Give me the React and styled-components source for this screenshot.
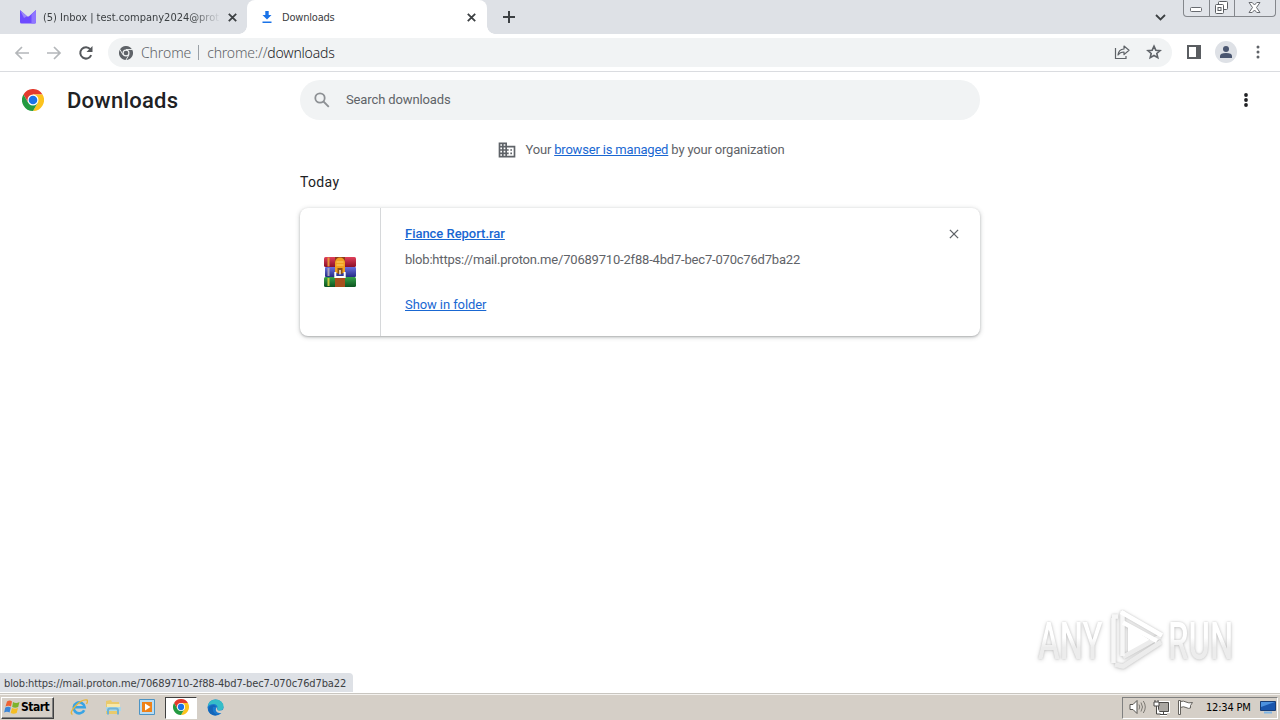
import React, { useState } from "react";
import styled, { createGlobalStyle } from "styled-components";

const GlobalStyle = createGlobalStyle`
  * {
    box-sizing: border-box;
  }
  body {
    margin: 0;
    background: #fff;
    overflow: hidden;
  }
  svg {
    flex: none;
  }
`;

const Screen = styled.div`
  width: 1280px;
  height: 720px;
  display: flex;
  flex-direction: column;
  position: relative;
  overflow: hidden;
  background: #fff;
  font-family: Roboto, "Liberation Sans", sans-serif;
`;

/* ---------- tab strip ---------- */

const TabStrip = styled.div`
  height: 34px;
  flex: none;
  display: flex;
  background: #dee1e6;
`;

const Tab = styled.div`
  width: ${(props) => (props.active ? "240px" : "247px")};
  height: 34px;
  display: flex;
  align-items: center;
  padding: ${(props) => (props.active ? "0 9px 0 15px" : "0 8px 0 20px")};
  position: relative;
  border-radius: 8px 8px 0 0;
  background: ${(props) => (props.active ? "#fff" : "transparent")};

  &::before,
  &::after {
    content: "";
    display: ${(props) => (props.active ? "block" : "none")};
    position: absolute;
    bottom: 0;
    width: 8px;
    height: 8px;
  }
  &::before {
    left: -8px;
    background: radial-gradient(circle at 0 0, transparent 7.5px, #fff 8px);
  }
  &::after {
    right: -8px;
    background: radial-gradient(circle at 100% 0, transparent 7.5px, #fff 8px);
  }
`;

const TabTitle = styled.span`
  flex: 1;
  min-width: 0;
  margin-left: ${(props) => props.gap};
  padding-top: 1px;
  white-space: nowrap;
  font-family: "DejaVu Sans Condensed", "DejaVu Sans", sans-serif;
  font-stretch: condensed;
  font-size: 11px;
  line-height: 16px;
  letter-spacing: ${(props) => props.spacing};
  color: #3c4043;
  mask-image: ${(props) =>
    props.fade ? "linear-gradient(90deg, #000 148px, transparent 178px)" : "none"};
`;

const TabClose = styled.button`
  width: 14px;
  height: 14px;
  flex: none;
  margin-left: 6px;
  padding: 0;
  border: 0;
  background: none;
  display: flex;
  align-items: center;
  justify-content: center;
`;

const NewTab = styled.div`
  width: 44px;
  display: flex;
  align-items: center;
  justify-content: center;
`;

const WindowTools = styled.div`
  margin-left: auto;
  display: flex;
  align-items: flex-start;
`;

const TabSearch = styled.div`
  width: 14px;
  height: 34px;
  margin-right: 14px;
  display: flex;
  align-items: center;
`;

const Caption = styled.div`
  width: 93px;
  height: 17px;
  margin-right: 4px;
  display: flex;
  border: 1px solid #84878c;
  border-top: 0;
  border-radius: 0 0 4px 4px;
  background: #e1e4e9;
`;

const CaptionButton = styled.div`
  width: ${(props) => props.w}px;
  display: flex;
  align-items: center;
  justify-content: center;
  padding: 0 1px 1px 0;
  & + & {
    border-left: 1px solid #84878c;
  }
`;

/* ---------- toolbar ---------- */

const Toolbar = styled.div`
  height: 38px;
  flex: none;
  display: flex;
  align-items: center;
  padding: 0 13px;
  border-bottom: 1px solid #dadce0;
`;

const NavButtons = styled.div`
  display: flex;
  gap: 14px;
  width: 95px;
`;

const Omnibox = styled.div`
  width: 1064px;
  height: 29px;
  border-radius: 15px;
  background: #f1f3f4;
  display: flex;
  align-items: center;
  padding: 0 10px 0 11px;
`;

const Origin = styled.span`
  margin-left: 8px;
  white-space: nowrap;
  font-family: "Noto Sans", "DejaVu Sans", sans-serif;
  font-weight: 300;
  font-size: 14px;
  line-height: 20px;
  letter-spacing: ${(props) => props.spacing};
  color: #5f6368;

  b {
    font-weight: 300;
    color: #202124;
  }
`;

const OriginDivider = styled.i`
  width: 1px;
  height: 15px;
  margin-left: 7px;
  background: #9aa0a6;
`;

const OmniboxActions = styled.div`
  margin-left: auto;
  padding-bottom: 1px;
  display: flex;
  gap: 16px;
`;

const ToolbarActions = styled.div`
  margin-left: 15px;
  padding-bottom: 1px;
  display: flex;
  align-items: center;
`;

const Avatar = styled.div`
  width: 22px;
  height: 22px;
  margin: 0 19px 0 14px;
  border-radius: 50%;
  background: #dee1e6;
  display: flex;
  align-items: center;
  justify-content: center;
`;

/* ---------- downloads page ---------- */

const Page = styled.main`
  flex: 1;
  min-height: 0;
  display: flex;
  flex-direction: column;
  position: relative;
`;

const Header = styled.header`
  height: 56px;
  display: flex;
  align-items: center;
  padding: 0 26px 0 22px;
`;

const PageTitle = styled.h1`
  width: 233px;
  margin: 0 0 0 23px;
  padding-top: 2px;
  font-size: 22px;
  line-height: 28px;
  font-weight: 500;
  letter-spacing: ${(props) => props.spacing};
  color: #202124;
`;

const SearchField = styled.label`
  width: 680px;
  height: 40px;
  border-radius: 20px;
  background: #f1f3f4;
  display: flex;
  align-items: center;
  padding-left: 12px;
  gap: 14px;

  input {
    flex: 1;
    padding: 0;
    border: 0;
    outline: 0;
    background: none;
    font: 13px/20px Roboto, sans-serif;
    letter-spacing: -0.12px;
    color: #202124;
  }
  input::placeholder {
    color: #5f6368;
    opacity: 1;
  }
`;

const MoreMenu = styled.div`
  margin-left: auto;
  width: 16px;
  display: flex;
  justify-content: center;
`;

const Managed = styled.div`
  height: 44px;
  display: flex;
  align-items: center;
  justify-content: center;
  gap: 8px;
  padding-left: 2px;
  font-size: 13px;
  line-height: 20px;
  letter-spacing: -0.18px;
  color: #5f6368;
`;

const Link = styled.a`
  color: #1967d2;
  text-decoration: underline;
  font-weight: ${(props) => (props.strong ? 500 : 400)};
  letter-spacing: ${(props) => props.spacing || "inherit"};
`;

const Content = styled.section`
  width: 680px;
  margin: 0 auto;
`;

const DateHeading = styled.h3`
  margin: 0 0 15px;
  font-size: 14px;
  line-height: 21px;
  font-weight: 400;
  letter-spacing: 0.35px;
  color: #202124;
`;

const Card = styled.article`
  height: 128px;
  display: flex;
  border-radius: 8px;
  background: #fff;
  box-shadow: 0 1px 2px rgba(60, 64, 67, 0.3), 0 1px 4px 1px rgba(60, 64, 67, 0.18);
`;

const FileIcon = styled.div`
  width: 81px;
  border-right: 1px solid #d6d8da;
  display: flex;
  align-items: center;
  justify-content: center;
`;

const Details = styled.div`
  flex: 1;
  padding: 16px 24px;
  display: flex;
  flex-direction: column;
  align-items: flex-start;
  font-size: 13px;
  line-height: 20px;
  white-space: nowrap;
`;

const FileUrl = styled.span`
  margin: 6px 0 25px;
  color: #5f6368;
  letter-spacing: ${(props) => props.spacing};
`;

const RemoveButton = styled.button`
  width: 14px;
  height: 14px;
  margin: 19px 19px 0 0;
  padding: 0;
  border: 0;
  background: none;
  display: flex;
  align-items: center;
  justify-content: center;
`;

const StatusBubble = styled.div`
  position: absolute;
  left: 0;
  bottom: 1px;
  width: 353px;
  height: 19px;
  padding-left: 4px;
  border-radius: 0 4px 0 0;
  background: #dee1e6;
  font-family: "DejaVu Sans Condensed", "DejaVu Sans", sans-serif;
  font-stretch: condensed;
  font-size: 11px;
  line-height: 21px;
  letter-spacing: ${(props) => props.spacing};
  white-space: nowrap;
  color: #3c4043;
`;

const Watermark = styled.div`
  position: absolute;
  left: 1038px;
  top: 609px;
  width: 200px;
  height: 64px;
  display: flex;
  align-items: center;
  filter: drop-shadow(0 0 1px rgba(0, 0, 0, 0.16)) drop-shadow(0 1px 2px rgba(0, 0, 0, 0.16));
`;

const WatermarkWord = styled.span`
  display: block;
  width: 110px;
  padding-top: 2px;
  font-size: 52px;
  line-height: 64px;
  font-weight: 500;
  background: linear-gradient(#fff 45%, #ececec 60%);
  background-clip: text;
  color: transparent;
  white-space: nowrap;
  transform: scaleX(${(props) => props.squeeze});
  transform-origin: 0 50%;
`;

const WordSlot = styled.div`
  width: ${(props) => props.w}px;
  margin-left: ${(props) => props.gap || 0}px;
`;

/* ---------- taskbar ---------- */

const Taskbar = styled.footer`
  height: 27px;
  flex: none;
  display: flex;
  align-items: center;
  padding: 1px 2px 0 1px;
  background: #d5cfc7;
  border-top: 1px solid #c9c6c0;
  box-shadow: inset 0 1px 0 #f4f2ef;
`;

const StartButton = styled.button`
  width: 53px;
  height: 22px;
  padding: 0 0 2px 2px;
  display: flex;
  align-items: center;
  gap: 0;
  background: #d5cfc7;
  border: 1px solid;
  border-color: #fff #404040 #404040 #fff;
  box-shadow: inset -1px -1px 0 #808080;
  font: 700 12px/16px "DejaVu Sans Condensed", "DejaVu Sans", sans-serif;
  font-stretch: condensed;
  letter-spacing: -0.5px;
  color: #000;
`;

const QuickLaunch = styled.div`
  margin-left: 8px;
  display: flex;
  align-items: center;
`;

const TaskItem = styled.div`
  width: ${(props) => (props.pressed ? "32px" : "34px")};
  height: 22px;
  margin: ${(props) => (props.pressed ? "0 1px" : "0")};
  padding-bottom: 1px;
  display: flex;
  align-items: center;
  justify-content: center;
  background: ${(props) => (props.pressed ? "#fff" : "transparent")};
  border: ${(props) => (props.pressed ? "1px solid" : "0")};
  border-color: #404040 #fff #fff #404040;
`;

const Tray = styled.div`
  width: 156px;
  height: 22px;
  margin-left: auto;
  padding: 0 1px 1px 6px;
  display: flex;
  align-items: center;
  gap: 7px;
  border: 1px solid;
  border-color: #808080 #fff #fff #808080;
`;

const Clock = styled.span`
  width: 47px;
  margin-left: 5px;
  padding-top: 1px;
  font: 11px/16px "DejaVu Sans Condensed", "DejaVu Sans", sans-serif;
  font-stretch: condensed;
  letter-spacing: -0.2px;
  white-space: nowrap;
  color: #000;
`;

/* ---------- icons ---------- */

const Cross = ({ size = 9, width = 1.8, color = "#3c4043" }) => (
  <svg width={size} height={size} viewBox="0 0 9 9" stroke={color} strokeWidth={width}>
    <path d="M.8.8l7.4 7.4M8.2.8L.8 8.2" />
  </svg>
);

const ProtonIcon = () => (
  <svg width="16" height="14" viewBox="0 0 16 14">
    <path d="M0 0l7 6.2q1 .8 2 0L16 0v12q0 1.500-1.500 1.500H1.500Q0 13.500 0 12z" fill="#6d4aff" />
    <path d="M11.500 4.200L16 0v12q0 1.500-1.500 1.500h-3z" fill="#8f76ff" />
    <path d="M0 0l7 6.200L4 8z" fill="#9a86f8" />
  </svg>
);

const DownloadIcon = () => (
  <svg width="10" height="13" viewBox="0 0 10 13" fill="#1a73e8">
    <path d="M3.300 0h3.400v4h2.800L5 8.500.5 4h2.800zM.5 10.500h9v1.500h-9z" />
  </svg>
);

const ArrowIcon = ({ flip }) => (
  <svg width="18" height="16" viewBox="0 0 18 16" fill="none" stroke="#b4b7ba" strokeWidth="1.700">
    <path d={flip ? "M2 8h13M9 2l6 6-6 6" : "M16 8H3M9 2L3 8l6 6"} />
  </svg>
);

const ReloadIcon = () => (
  <svg width="16" height="16" viewBox="-1 0 16 16">
    <path d="M13.200 10.200A5.700 5.700 0 1 1 12.400 4.300" fill="none" stroke="#55585c" strokeWidth="2" />
    <path d="M14.500 1v6h-6z" fill="#55585c" />
  </svg>
);

const ChromeIcon = ({ size, mono }) => {
  const [red, yellow, green, blue] = mono
    ? ["#5f6368", "#5f6368", "#5f6368", "#5f6368"]
    : ["#e33b2e", "#fcc31e", "#249a41", "#1a73e8"];
  return (
    <svg width={size} height={size} viewBox="0 0 48 48">
      <path d="M24 24L13.600 30 3.200 12A24 24 0 0 1 44.800 12H24z" fill={red} />
      <path d="M24 12h20.800A24 24 0 0 1 24 48l10.400-18L24 24z" fill={yellow} />
      <path d="M3.200 12A24 24 0 0 0 24 48l10.400-18L24 24l-10.400 6z" fill={green} />
      {mono && (
        <path d="M24 12h22M34.400 30L23.500 49M13.600 30L2.500 11" stroke="#f1f3f4" strokeWidth="3" />
      )}
      <circle cx="24" cy="24" r="12" fill={mono ? "#f1f3f4" : "#fff"} />
      <circle cx="24" cy="24" r={mono ? 8 : 9.4} fill={blue} />
    </svg>
  );
};

const ShareIcon = () => (
  <svg width="16" height="16" viewBox="0 0 16 16" fill="none" stroke="#5f6368" strokeWidth="1.200">
    <path d="M1.500 4v10.500H12V12" />
    <path d="M4 11q.6-5.600 6-6V2l5 4.300-5 4.300V8Q6 8 4 11z" strokeLinejoin="round" />
  </svg>
);

const StarIcon = () => (
  <svg width="16" height="16" viewBox="0 0 16 16" fill="none" stroke="#5f6368" strokeWidth="1.600">
    <path d="M8 2.200l1.800 4 4.300.4-3.300 2.900 1 4.200L8 11.500l-3.800 2.200 1-4.200-3.300-2.900 4.300-.4z" />
  </svg>
);

const SidePanelIcon = () => (
  <svg width="14" height="14" viewBox="0 0 14 14">
    <path d="M1 1h12v12H1z" fill="none" stroke="#5a5d61" strokeWidth="2" />
    <path d="M9 0h5v14H9z" fill="#5a5d61" />
  </svg>
);

const PersonIcon = () => (
  <svg width="12" height="12" viewBox="0 0 12 12" fill="#4a5670">
    <circle cx="6" cy="3" r="3" />
    <path d="M0 12V10q0-3 6-3t6 3v2z" />
  </svg>
);

const Dots = ({ r = 1.5, gap = 5, color = "#5f6368" }) => (
  <svg width="4" height="16" viewBox="0 0 4 16" fill={color}>
    <circle cx="2" cy={8 - gap} r={r} />
    <circle cx="2" cy="8" r={r} />
    <circle cx="2" cy={8 + gap} r={r} />
  </svg>
);

const SearchIcon = () => (
  <svg width="20" height="20" viewBox="0 0 20 20" fill="none" stroke="#8d9094" strokeWidth="1.800">
    <circle cx="8" cy="8" r="4.700" />
    <path d="M11.500 11.500l5.300 5.300" />
  </svg>
);

const BusinessIcon = () => (
  <svg width="20" height="20" viewBox="0 0 24 24" fill="#5f6368">
    <path d="M12 7V3H2v18h20V7H12zM6 19H4v-2h2v2zm0-4H4v-2h2v2zm0-4H4V9h2v2zm0-4H4V5h2v2zm4 12H8v-2h2v2zm0-4H8v-2h2v2zm0-4H8V9h2v2zm0-4H8V5h2v2zm10 12h-8v-2h2v-2h-2v-2h2v-2h-2V9h8v10zm-2-8h-2v2h2v-2zm0 4h-2v2h2v-2z" />
  </svg>
);

const RarIcon = () => (
  <svg width="32" height="32" viewBox="0 0 32 32">
    <defs>
      {[
        ["rarRed", "#e0405a", "#8c1028"],
        ["rarBlue", "#6a70e0", "#262c86"],
        ["rarGreen", "#36a34a", "#0c5420"],
      ].map(([id, top, bottom]) => (
        <linearGradient id={id} key={id} x1="0" y1="0" x2="0" y2="1">
          <stop offset="0" stopColor={top} />
          <stop offset="1" stopColor={bottom} />
        </linearGradient>
      ))}
    </defs>
    <rect y="1" width="32" height="10" rx="1.500" fill="url(#rarRed)" />
    <rect x="1" y="11" width="31" height="10" rx="1" fill="url(#rarBlue)" />
    <rect y="21" width="32" height="10" rx="1.500" fill="url(#rarGreen)" />
    <path d="M4.500 1.500v9" stroke="#e8963c" strokeWidth="2" />
    <path d="M4.500 12v8" stroke="#aaa4bc" strokeWidth="2" />
    <path d="M4.500 22v8" stroke="#c8c63e" strokeWidth="2" />
    <path d="M11 22h10v9H11z" fill="#a84f1d" />
    <path d="M11 1h10v5H11z" fill="#8e3a1c" />
    <path d="M11 17V6q1-4.500 5-4.500T21 6v11z" fill="#f0a020" />
    <path d="M12.500 6h7M12.500 9h7" stroke="#ffd46b" />
    <path d="M13.500 12h5v6h-5z" fill="#8a4c14" />
    <path d="M11.300 16v5h9.400v-5" fill="none" stroke="#fff" strokeWidth="2" />
    <path d="M16 14v4.500" stroke="#fff" strokeWidth="1.300" />
  </svg>
);

const PlayMark = () => (
  <svg width="60" height="66" viewBox="0 0 60 66" fill="none" strokeLinejoin="round">
    <path d="M24 18l22 14-22 13z" fill="#fff" />
    <path d="M56 28.500L19 49M57 34L19 58.500l-8-2" stroke="#ececec" strokeWidth="4.500" />
    <path d="M9.500 10v45M14 8.500H8M18.500 3v45" stroke="#f7f7f7" strokeWidth="4.500" />
    <path d="M17 4l41 23.500M19 14.500L53 33" stroke="#fff" strokeWidth="4.500" />
  </svg>
);

const WindowsFlag = () => (
  <svg width="17" height="16" viewBox="0 0 17 16">
    <path d="M3 2.500q3-2 5 0L7 7.500q-2.500-1.500-5.500 0z" fill="#ee6334" />
    <path d="M9 3q3 1.800 6.500 0l-1.300 5q-3 1.500-6 0z" fill="#7db32b" />
    <path d="M1.300 8.600q3-1.700 5.500 0l-1.200 5q-2.500-1.800-5.500 0z" fill="#3b86d8" />
    <path d="M8 9q3 1.500 6 0l-1.300 5q-3.200 1.500-6 0z" fill="#f5bd23" />
  </svg>
);

const IeIcon = () => (
  <svg width="18" height="18" viewBox="0 0 18 18" fill="none">
    <path d="M14.200 12.200A5.500 5.500 0 1 1 14.700 9.300H5" stroke="#39a4e4" strokeWidth="2.600" />
    <path d="M2.500 16.500Q-1 15 5.500 8T17 2q1.200 1-.5 4" stroke="#e7b63b" strokeWidth="1.400" />
  </svg>
);

const ExplorerIcon = () => (
  <svg width="18" height="18" viewBox="0 0 18 18">
    <path d="M2 3l5-1 1 2h7v12H2z" fill="#e9ca6d" />
    <path d="M3 6h13v6H3z" fill="#f8e8a8" />
    <path d="M2 9h15v4H2z" fill="#a9d7e8" />
    <path d="M4 16.500v-4q0-2 2-2h6q2 0 2 2v4" fill="none" stroke="#6fb3d6" strokeWidth="2" />
  </svg>
);

const MediaIcon = () => (
  <svg width="16" height="16" viewBox="0 0 16 16">
    <path d="M.5.5h15v15H.5z" fill="#b9dcf3" stroke="#4d94c4" />
    <path d="M3 3h10v10H3z" fill="#ef8218" />
    <path d="M6 4.500L11.500 8 6 11.500z" fill="#fff" />
  </svg>
);

const EdgeIcon = () => (
  <svg width="17" height="17" viewBox="0 0 17 17">
    <circle cx="8.500" cy="8.500" r="8" fill="#1979cf" />
    <path d="M.6 7.500Q2 .5 8.500.5q7.500.3 8 7 0 4-4 4.200-3 0-2-2Q11 5.500 7 5 2.500 5 .6 7.500z" fill="#35bdc8" />
    <path d="M6 8Q4.500 15 12 15.600 6 18 2 13 0 8 4 6.500 8 5 9 8z" fill="#1465b8" />
    <path d="M10.300 8.500q-1 3 2 3.300 3 0 4.700-1.800v3.500q-3 1.500-6.500 0-2.800-2-1-5z" fill="#d5cfc7" />
  </svg>
);

const SpeakerIcon = () => (
  <svg width="17" height="16" viewBox="0 0 17 16" fill="none" stroke="#55534f">
    <path d="M1 5.500h3l4-4v13l-4-4H1z" fill="#fff" />
    <path d="M10 5.500q1.500 2.500 0 5M12 3.500q3 4.500 0 9M14.300 2q4 6 0 12" stroke="#7c7973" />
  </svg>
);

const NetworkIcon = () => (
  <svg width="17" height="17" viewBox="0 0 17 17" fill="none" stroke="#4b4946">
    <path d="M5.500 3.500h10v9h-10zM7 15.500h7" stroke="#fff" strokeWidth="3" />
    <path d="M5.500 3.500h10v9h-10z" fill="#aaa7a2" />
    <path d="M7 15.500h7M10.500 12.500v3" />
    <path d="M1 3h5v4H1zM2 1v2M5 1v2M3.500 7v8h4" fill="#fff" />
  </svg>
);

const FlagIcon = () => (
  <svg width="17" height="17" viewBox="0 0 17 17" stroke="#66635e">
    <path d="M3.500 2.500q3-1 5.500.500t6.500.500l-2 3 0 2.500q-2 1-4.500-.500t-5.500 0z" fill="#fff" />
    <path d="M1.500 1.500h2v14h-2z" fill="#fff" />
  </svg>
);

const DesktopIcon = () => (
  <svg width="16" height="16" viewBox="0 0 16 16">
    <path d="M.5 2.500h15v9H.5z" fill="#1955ad" stroke="#183d77" />
    <path d="M1 3h14L1 8z" fill="#4c91df" />
    <path d="M4 13.500h8" stroke="#80b6e5" strokeWidth="2" />
  </svg>
);

const MinimizeGlyph = () => (
  <svg width="12" height="9" viewBox="0 0 12 9">
    <rect x=".5" y="4.500" width="11" height="4" rx="1" fill="#fff" stroke="#686b70" />
  </svg>
);

const RestoreGlyph = () => (
  <svg width="13" height="13" viewBox="0 0 13 13" fill="#fff" stroke="#5b5e63">
    <rect x="3.500" y=".5" width="9" height="8" rx="1" />
    <rect x=".5" y="3.500" width="8" height="9" rx="1" />
    <rect x="3" y="6.500" width="3" height="3" />
  </svg>
);

const CloseGlyph = () => (
  <svg width="13" height="11" viewBox="0 0 13 11">
    <path d="M1 .5h3.200L6.500 3 8.800.5H12L8.500 5.500l3.500 5H8.800L6.500 8l-2.300 2.500H1l3.500-5z" fill="#fff" stroke="#686b70" />
  </svg>
);

function App() {
  const [query, setQuery] = useState("");

  return (
    <Screen>
      <GlobalStyle />

      <TabStrip>
        <Tab>
          <ProtonIcon />
          <TabTitle gap="7px" spacing="-0.02px" fade>
            (5) Inbox | test.company2024@prot
          </TabTitle>
          <TabClose>
            <Cross />
          </TabClose>
        </Tab>
        <Tab active>
          <DownloadIcon />
          <TabTitle gap="10px" spacing="-0.2px">Downloads</TabTitle>
          <TabClose>
            <Cross />
          </TabClose>
        </Tab>
        <NewTab>
          <svg width="12" height="12" viewBox="0 0 12 12" stroke="#3c4043" strokeWidth="2">
            <path d="M6 0v12M0 6h12" />
          </svg>
        </NewTab>
        <WindowTools>
          <TabSearch>
            <svg width="11" height="7" viewBox="0 0 11 7" fill="none" stroke="#3c4043" strokeWidth="1.800">
              <path d="M1 1l4.500 4.500L10 1" />
            </svg>
          </TabSearch>
          <Caption>
            <CaptionButton w={25}>
              <MinimizeGlyph />
            </CaptionButton>
            <CaptionButton w={25}>
              <RestoreGlyph />
            </CaptionButton>
            <CaptionButton w={41}>
              <CloseGlyph />
            </CaptionButton>
          </Caption>
        </WindowTools>
      </TabStrip>

      <Toolbar>
        <NavButtons>
          <ArrowIcon />
          <ArrowIcon flip />
          <ReloadIcon />
        </NavButtons>
        <Omnibox>
          <ChromeIcon size={14} mono />
          <Origin spacing="-0.1px">Chrome</Origin>
          <OriginDivider />
          <Origin spacing="-0.2px">
            chrome://<b>downloads</b>
          </Origin>
          <OmniboxActions>
            <ShareIcon />
            <StarIcon />
          </OmniboxActions>
        </Omnibox>
        <ToolbarActions>
          <SidePanelIcon />
          <Avatar>
            <PersonIcon />
          </Avatar>
          <Dots />
        </ToolbarActions>
      </Toolbar>

      <Page>
        <Header>
          <ChromeIcon size={22} />
          <PageTitle spacing="0.25px">Downloads</PageTitle>
          <SearchField>
            <SearchIcon />
            <input
              placeholder="Search downloads"
              value={query}
              onChange={(e) => setQuery(e.target.value)}
            />
          </SearchField>
          <MoreMenu>
            <Dots r={1.9} color="#202124" />
          </MoreMenu>
        </Header>
        <Managed>
          <BusinessIcon />
          <span>
            Your <Link>browser is managed</Link> by your organization
          </span>
        </Managed>
        <Content>
          <DateHeading>Today</DateHeading>
          <Card>
            <FileIcon>
              <RarIcon />
            </FileIcon>
            <Details>
              <Link strong spacing="-0.03px">Fiance Report.rar</Link>
              <FileUrl spacing="-0.19px">
                blob:https://mail.proton.me/70689710-2f88-4bd7-bec7-070c76d7ba22
              </FileUrl>
              <Link spacing="-0.09px">Show in folder</Link>
            </Details>
            <RemoveButton>
              <Cross size={10} width={1.2} color="#5f6368" />
            </RemoveButton>
          </Card>
        </Content>
        <StatusBubble spacing="-0.12px">
          blob:https://mail.proton.me/70689710-2f88-4bd7-bec7-070c76d7ba22
        </StatusBubble>
      </Page>

      <Taskbar>
        <StartButton>
          <WindowsFlag />
          Start
        </StartButton>
        <QuickLaunch>
          <TaskItem>
            <IeIcon />
          </TaskItem>
          <TaskItem>
            <ExplorerIcon />
          </TaskItem>
          <TaskItem>
            <MediaIcon />
          </TaskItem>
          <TaskItem pressed>
            <ChromeIcon size={16} />
          </TaskItem>
          <TaskItem>
            <EdgeIcon />
          </TaskItem>
        </QuickLaunch>
        <Tray>
          <SpeakerIcon />
          <NetworkIcon />
          <FlagIcon />
          <Clock>12:34 PM</Clock>
          <DesktopIcon />
        </Tray>
      </Taskbar>

      <Watermark>
        <WordSlot w={66}>
          <WatermarkWord squeeze={0.63}>ANY</WatermarkWord>
        </WordSlot>
        <PlayMark />
        <WordSlot w={68} gap={4}>
          <WatermarkWord squeeze={0.63}>RUN</WatermarkWord>
        </WordSlot>
      </Watermark>
    </Screen>
  );
}

export default App;
